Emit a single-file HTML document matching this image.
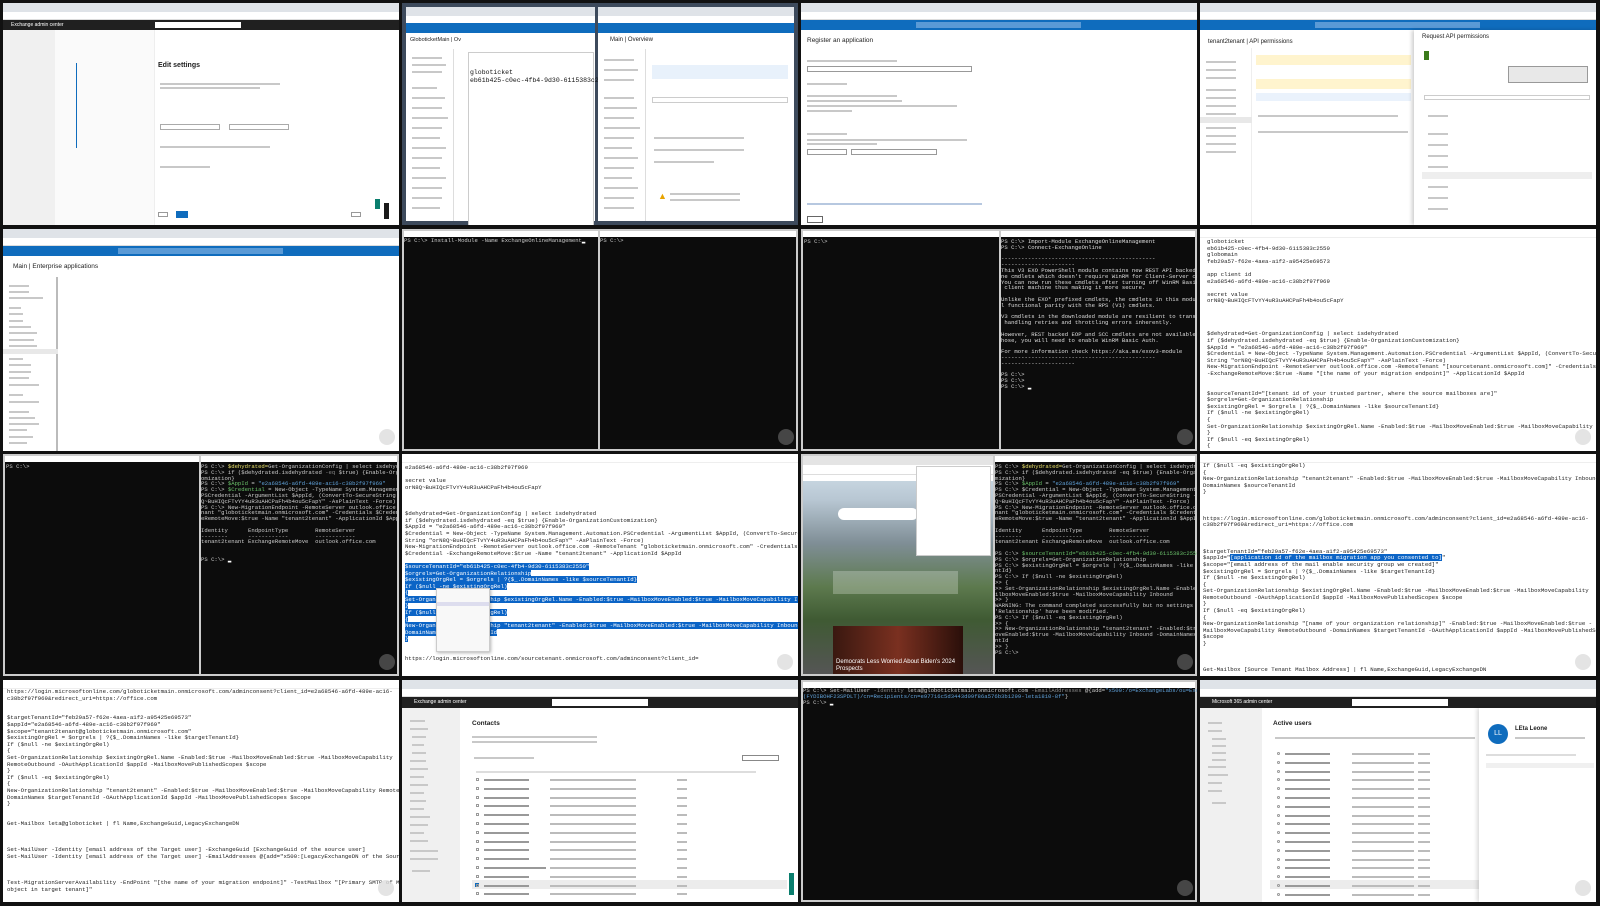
<!DOCTYPE html>
<html><head><meta charset="utf-8">
<style>
*{margin:0;padding:0;box-sizing:border-box}
body{width:1600px;height:906px;background:#111;position:relative;overflow:hidden;font-family:"Liberation Sans",sans-serif}
.t{position:absolute;width:396px;height:222px;background:#fff;overflow:hidden}
.a{position:absolute}
.mono{font-family:"Liberation Mono",monospace;white-space:pre;color:#222}
.tab{background:#dfe3e8;height:9px;left:0;right:0;top:0}
.addr{background:#fff;height:8px;left:0;right:0;top:9px;border-bottom:1px solid #ddd}
.hdr{height:10px;left:0;right:0;top:17px}
.az{background:#0f6cbd}.ex{background:#202020}
.ln{position:absolute;height:2px;background:#c8c8c8}
.term{background:#0c0c0c}
.tt{position:absolute;left:0;right:0;top:0;height:6px;background:#fff}
.tx{position:absolute;font-family:"Liberation Mono",monospace;white-space:pre;color:#ccc;font-size:5.6px;line-height:5.8px}
.np{font-size:5.7px;line-height:6.6px}
.sel{background:#0b64c6;color:#fff}
.btn{position:absolute;width:16px;height:16px;border-radius:50%;background:#ddd;opacity:.8}
</style></head><body>

<!-- 1-1 Exchange edit settings -->
<div class="t" style="left:3px;top:3px">
 <div class="a tab"></div><div class="a addr"></div>
 <div class="a hdr ex"><span style="position:absolute;left:8px;top:2px;color:#fff;font-size:5px">Exchange admin center</span><div class="a" style="left:152px;top:2px;width:86px;height:6px;background:#fff"></div></div>
 <div class="a" style="left:0;top:27px;width:52px;height:195px;background:#f0f0f0"></div>
 <div class="a" style="left:52px;top:27px;width:100px;height:195px;background:#fafafa;border-right:1px solid #eee"></div>
 <div class="a" style="left:73px;top:60px;width:1px;height:85px;background:#0f6cbd"></div>
 <div class="a" style="left:155px;top:59px;font-size:7px;font-weight:bold;color:#222">Edit settings</div>
 <div class="ln" style="left:157px;top:80px;width:120px"></div><div class="ln" style="left:157px;top:84px;width:100px"></div>
 <div class="a" style="left:157px;top:121px;width:60px;height:6px;border:1px solid #aaa"></div>
 <div class="a" style="left:226px;top:121px;width:60px;height:6px;border:1px solid #aaa"></div>
 <div class="ln" style="left:157px;top:143px;width:110px"></div><div class="ln" style="left:157px;top:163px;width:50px"></div>
 <div class="a" style="left:160px;top:331px"></div>
 <div class="a" style="left:155px;top:209px;width:10px;height:5px;border:1px solid #999"></div>
 <div class="a" style="left:173px;top:208px;width:12px;height:7px;background:#0f6cbd"></div>
 <div class="a" style="left:348px;top:209px;width:10px;height:5px;border:1px solid #999"></div>
 <div class="a" style="left:381px;top:200px;width:5px;height:16px;background:#1a1a1a"></div>
 <div class="a" style="left:372px;top:196px;width:5px;height:10px;background:#0a7e6e"></div>
</div>

<!-- 1-2 two azure browsers + notepad -->
<div class="t" style="left:402px;top:3px;background:#3d4a5c">
 <div class="a" style="left:4px;top:4px;width:189px;height:214px;background:#fff">
  <div class="a tab"></div><div class="a addr"></div><div class="a hdr az" style="top:16px"></div>
  <div class="a" style="left:4px;top:30px;font-size:5.5px;color:#222">GloboticketMain | Ov</div>
  <div class="a" style="left:0;top:42px;width:48px;height:172px;border-right:1px solid #ddd"></div>
  <div class="ln" style="left:6px;top:50px;width:30px"></div><div class="ln" style="left:6px;top:57px;width:34px"></div><div class="ln" style="left:6px;top:64px;width:30px"></div><div class="ln" style="left:6px;top:80px;width:25px"></div><div class="ln" style="left:6px;top:90px;width:33px"></div><div class="ln" style="left:6px;top:100px;width:30px"></div><div class="ln" style="left:6px;top:110px;width:36px"></div><div class="ln" style="left:6px;top:120px;width:30px"></div><div class="ln" style="left:6px;top:130px;width:28px"></div><div class="ln" style="left:6px;top:140px;width:34px"></div><div class="ln" style="left:6px;top:150px;width:30px"></div><div class="ln" style="left:6px;top:160px;width:28px"></div><div class="ln" style="left:6px;top:170px;width:34px"></div><div class="ln" style="left:6px;top:180px;width:30px"></div><div class="ln" style="left:6px;top:190px;width:30px"></div><div class="ln" style="left:6px;top:200px;width:28px"></div>
  <div class="a" style="left:62px;top:45px;width:126px;height:245px;background:#fff;border:1px solid #ccc;height:240px"></div>
  <div class="a mono" style="left:64px;top:62px;font-size:6.5px;line-height:8px;color:#111">globoticket
eb61b425-c0ec-4fb4-9d30-6115383c2550</div>
 </div>
 <div class="a" style="left:196px;top:4px;width:196px;height:214px;background:#fff">
  <div class="a tab"></div><div class="a addr"></div><div class="a hdr az" style="top:16px"></div>
  <div class="a" style="left:12px;top:30px;font-size:6px;color:#222">Main | Overview</div>
  <div class="a" style="left:0;top:42px;width:48px;height:172px;border-right:1px solid #ddd"></div>
  <div class="ln" style="left:6px;top:52px;width:30px"></div><div class="ln" style="left:6px;top:62px;width:34px"></div><div class="ln" style="left:6px;top:72px;width:30px"></div><div class="ln" style="left:6px;top:90px;width:30px"></div><div class="ln" style="left:6px;top:100px;width:33px"></div><div class="ln" style="left:6px;top:110px;width:30px"></div><div class="ln" style="left:6px;top:120px;width:36px"></div><div class="ln" style="left:6px;top:130px;width:30px"></div><div class="ln" style="left:6px;top:140px;width:28px"></div><div class="ln" style="left:6px;top:150px;width:34px"></div><div class="ln" style="left:6px;top:160px;width:30px"></div><div class="ln" style="left:6px;top:170px;width:28px"></div><div class="ln" style="left:6px;top:180px;width:34px"></div><div class="ln" style="left:6px;top:190px;width:30px"></div><div class="ln" style="left:6px;top:200px;width:30px"></div>
  <div class="a" style="left:54px;top:58px;width:136px;height:14px;background:#e8f1fb"></div>
  <div class="a" style="left:54px;top:90px;width:136px;height:6px;border:1px solid #ccc"></div>
  <div class="ln" style="left:56px;top:130px;width:90px"></div><div class="ln" style="left:56px;top:142px;width:90px"></div><div class="ln" style="left:56px;top:154px;width:60px"></div>
  <div class="a" style="left:60px;top:184px;color:#e8a300;font-size:9px">▲</div>
  <div class="ln" style="left:72px;top:186px;width:70px"></div><div class="ln" style="left:72px;top:192px;width:70px"></div>
 </div>
</div>

<!-- 1-3 register app -->
<div class="t" style="left:801px;top:3px">
 <div class="a tab"></div><div class="a addr"></div><div class="a hdr az"><div class="a" style="left:115px;top:2px;width:165px;height:6px;background:#5a9ad6"></div></div>
 <div class="a" style="left:6px;top:34px;font-size:6.5px;color:#222">Register an application</div>
 <div class="ln" style="left:6px;top:57px;width:90px"></div>
 <div class="a" style="left:6px;top:63px;width:165px;height:6px;border:1px solid #999"></div>
 <div class="ln" style="left:6px;top:80px;width:40px"></div>
 <div class="ln" style="left:6px;top:92px;width:90px"></div><div class="ln" style="left:6px;top:97px;width:95px"></div><div class="ln" style="left:6px;top:102px;width:150px"></div><div class="ln" style="left:6px;top:107px;width:45px"></div>
 <div class="ln" style="left:6px;top:130px;width:40px"></div><div class="ln" style="left:6px;top:136px;width:160px"></div><div class="ln" style="left:6px;top:140px;width:70px"></div>
 <div class="a" style="left:6px;top:146px;width:40px;height:6px;border:1px solid #999"></div><div class="a" style="left:50px;top:146px;width:86px;height:6px;border:1px solid #999"></div>
 <div class="ln" style="left:6px;top:200px;width:175px;background:#b7c8e0"></div>
 <div class="a" style="left:6px;top:213px;width:16px;height:7px;border:1px solid #666"></div>
</div>

<!-- 1-4 API permissions -->
<div class="t" style="left:1200px;top:3px">
 <div class="a tab"></div><div class="a addr"></div><div class="a hdr az"><div class="a" style="left:115px;top:2px;width:165px;height:6px;background:#5a9ad6"></div></div>
 <div class="a" style="left:8px;top:36px;font-size:6px;color:#222">tenant2tenant | API permissions</div>
 <div class="a" style="left:0;top:45px;width:52px;height:177px;border-right:1px solid #eee"></div>
 <div class="ln" style="left:6px;top:58px;width:30px"></div><div class="ln" style="left:6px;top:66px;width:30px"></div><div class="ln" style="left:6px;top:74px;width:30px"></div><div class="ln" style="left:6px;top:86px;width:30px"></div><div class="ln" style="left:6px;top:94px;width:30px"></div><div class="ln" style="left:6px;top:102px;width:30px"></div><div class="ln" style="left:6px;top:110px;width:30px"></div><div class="a" style="left:0;top:114px;width:52px;height:6px;background:#e8e8e8"></div><div class="ln" style="left:6px;top:124px;width:30px"></div><div class="ln" style="left:6px;top:132px;width:30px"></div><div class="ln" style="left:6px;top:140px;width:30px"></div><div class="ln" style="left:6px;top:148px;width:30px"></div>
 <div class="a" style="left:56px;top:52px;width:155px;height:10px;background:#fff4ce"></div>
 <div class="a" style="left:56px;top:76px;width:155px;height:10px;background:#fff4ce"></div>
 <div class="a" style="left:56px;top:90px;width:155px;height:8px;background:#eaf2fc"></div>
 <div class="ln" style="left:58px;top:112px;width:140px"></div><div class="ln" style="left:58px;top:128px;width:150px"></div>
 <div class="a" style="left:214px;top:27px;width:182px;height:195px;background:#fff;box-shadow:-2px 0 4px rgba(0,0,0,.2)"></div>
 <div class="a" style="left:222px;top:31px;font-size:6px;color:#222">Request API permissions</div>
 <div class="a" style="left:224px;top:48px;width:5px;height:9px;background:#3a7a1a"></div>
 <div class="a" style="left:308px;top:63px;width:80px;height:17px;background:#e8e8e8;border:1px solid #999"></div>
 <div class="a" style="left:224px;top:92px;width:166px;height:5px;border:1px solid #ccc"></div>
 <div class="ln" style="left:228px;top:112px;width:20px"></div><div class="ln" style="left:228px;top:130px;width:20px"></div><div class="ln" style="left:228px;top:141px;width:20px"></div><div class="ln" style="left:228px;top:152px;width:20px"></div><div class="ln" style="left:228px;top:163px;width:20px"></div><div class="a" style="left:222px;top:169px;width:170px;height:7px;background:#eee"></div><div class="ln" style="left:228px;top:183px;width:20px"></div><div class="ln" style="left:228px;top:194px;width:20px"></div><div class="ln" style="left:228px;top:205px;width:20px"></div>
</div>

<!-- 2-1 Enterprise apps -->
<div class="t" style="left:3px;top:229px">
 <div class="a tab"></div><div class="a addr"></div><div class="a hdr az"><div class="a" style="left:115px;top:2px;width:165px;height:6px;background:#5a9ad6"></div></div>
 <div class="a" style="left:10px;top:34px;font-size:6.5px;color:#222">Main | Enterprise applications</div>
 <div class="a" style="left:0;top:48px;width:55px;height:174px;border-right:2px solid #bbb"></div>
 <div class="ln" style="left:6px;top:56px;width:20px"></div><div class="ln" style="left:6px;top:62px;width:20px"></div><div class="ln" style="left:6px;top:68px;width:34px"></div><div class="ln" style="left:6px;top:78px;width:12px"></div><div class="ln" style="left:6px;top:84px;width:14px"></div><div class="ln" style="left:6px;top:91px;width:14px"></div><div class="ln" style="left:6px;top:97px;width:22px"></div><div class="ln" style="left:6px;top:103px;width:28px"></div><div class="ln" style="left:6px;top:110px;width:25px"></div><div class="ln" style="left:6px;top:116px;width:28px"></div><div class="a" style="left:0;top:120px;width:55px;height:5px;background:#e8e8e8"></div><div class="ln" style="left:6px;top:129px;width:14px"></div><div class="ln" style="left:6px;top:135px;width:22px"></div><div class="ln" style="left:6px;top:142px;width:22px"></div><div class="ln" style="left:6px;top:148px;width:20px"></div><div class="ln" style="left:6px;top:155px;width:30px"></div><div class="ln" style="left:6px;top:165px;width:14px"></div><div class="ln" style="left:6px;top:172px;width:30px"></div><div class="ln" style="left:6px;top:182px;width:20px"></div><div class="ln" style="left:6px;top:188px;width:26px"></div><div class="ln" style="left:6px;top:194px;width:30px"></div><div class="ln" style="left:6px;top:200px;width:18px"></div><div class="ln" style="left:6px;top:207px;width:24px"></div><div class="ln" style="left:6px;top:213px;width:18px"></div>
 <div class="btn" style="left:376px;top:200px"></div>
</div>

<!-- 2-2 two terminals -->
<div class="t term" style="left:402px;top:229px;background:#ccc">
 <div class="a term" style="left:2px;top:2px;width:194px;height:218px"><div class="tt"></div><div class="tx" style="left:0;top:7px">PS C:\&gt; Install-Module -Name ExchangeOnlineManagement<span style="color:#fff">▂</span></div></div>
 <div class="a term" style="left:198px;top:2px;width:196px;height:218px"><div class="tt"></div><div class="tx" style="left:0;top:7px">PS C:\&gt;</div></div>
 <div class="btn" style="left:376px;top:200px;background:#555"></div>
</div>

<!-- 2-3 two terminals -->
<div class="t term" style="left:801px;top:229px;background:#ccc">
 <div class="a term" style="left:2px;top:2px;width:196px;height:218px"><div class="tt"></div><div class="tx" style="left:1px;top:8px">PS C:\&gt;</div></div>
 <div class="a term" style="left:200px;top:2px;width:194px;height:218px"><div class="tt"></div><div class="tx" style="left:0;top:8px;color:#ddd">PS C:\&gt; Import-Module ExchangeOnlineManagement
PS C:\&gt; Connect-ExchangeOnline

----------------------------------------------
----------------------
This V3 EXO PowerShell module contains new REST API backed Exchange Onli
ne cmdlets which doesn't require WinRM for Client-Server communication.
You can now run these cmdlets after turning off WinRM Basic Auth in your
 client machine thus making it more secure.

Unlike the EXO* prefixed cmdlets, the cmdlets in this module support ful
l functional parity with the RPS (V1) cmdlets.

V3 cmdlets in the downloaded module are resilient to transient failures,
 handling retries and throttling errors inherently.

However, REST backed EOP and SCC cmdlets are not available yet. To use t
hose, you will need to enable WinRM Basic Auth.

For more information check https://aka.ms/exov3-module
----------------------------------------------
----------------------

PS C:\&gt;
PS C:\&gt;
PS C:\&gt; <span style="color:#fff">▂</span></div></div>
 <div class="btn" style="left:376px;top:200px;background:#555"></div>
</div>

<!-- 2-4 notepad -->
<div class="t" style="left:1200px;top:229px">
 <div class="a" style="left:0;top:0;right:0;height:9px;border-bottom:1px solid #eee"></div>
 <div class="a mono np" style="left:7px;top:10px">globoticket
eb61b425-c0ec-4fb4-9d30-6115383c2550
globomain
feb29a57-f62e-4aea-a1f2-a95425e69573

app client id
e2a68546-a6fd-489e-ac16-c38b2f97f969

secret value
orN8Q~BuHIQcFTvYY4uR3uAHCPaFh4b4ou5cFapY




$dehydrated=Get-OrganizationConfig | select isdehydrated
if ($dehydrated.isdehydrated -eq $true) {Enable-OrganizationCustomization}
$AppId = "e2a68546-a6fd-489e-ac16-c38b2f97f969"
$Credential = New-Object -TypeName System.Management.Automation.PSCredential -ArgumentList $AppId, (ConvertTo-SecureString -
String "orN8Q~BuHIQcFTvYY4uR3uAHCPaFh4b4ou5cFapY" -AsPlainText -Force)
New-MigrationEndpoint -RemoteServer outlook.office.com -RemoteTenant "[sourcetenant.onmicrosoft.com]" -Credentials $Credential
-ExchangeRemoteMove:$true -Name "[the name of your migration endpoint]" -ApplicationId $AppId


$sourceTenantId="[tenant id of your trusted partner, where the source mailboxes are]"
$orgrels=Get-OrganizationRelationship
$existingOrgRel = $orgrels | ?{$_.DomainNames -like $sourceTenantId}
If ($null -ne $existingOrgRel)
{
Set-OrganizationRelationship $existingOrgRel.Name -Enabled:$true -MailboxMoveEnabled:$true -MailboxMoveCapability Inbound
}
If ($null -eq $existingOrgRel)
{</div>
 <div class="btn" style="left:375px;top:200px"></div>
</div>

<!-- 3-1 terminals -->
<div class="t term" style="left:3px;top:454px;background:#ccc">
 <div class="a term" style="left:2px;top:2px;width:194px;height:218px"><div class="tt"></div><div class="tx" style="left:1px;top:8px">PS C:\&gt;</div></div>
 <div class="a term" style="left:198px;top:2px;width:196px;height:218px"><div class="tt"></div><div class="tx" style="left:0;top:8px">PS C:\&gt; <span style="color:#e8e06a">$dehydrated=</span>Get-OrganizationConfig | select isdehydrated
PS C:\&gt; if ($dehydrated.isdehydrated <span style="color:#888">-eq</span> $true) {Enable-OrganizationCust
omization}
PS C:\&gt; <span style="color:#6ac16a">$AppId</span> = <span style="color:#5fa0d8">"e2a68546-a6fd-489e-ac16-c38b2f97f969"</span>
PS C:\&gt; <span style="color:#6ac16a">$Credential</span> = New-Object -TypeName System.Management.Automation.
PSCredential -ArgumentList $AppId, (ConvertTo-SecureString -String "orN8
Q~BuHIQcFTvYY4uR3uAHCPaFh4b4ou5cFapY" -AsPlainText -Force)
PS C:\&gt; New-MigrationEndpoint -RemoteServer outlook.office.com -RemoteTe
nant "globoticketmain.onmicrosoft.com" -Credentials $Credential -Exchang
eRemoteMove:$true -Name "tenant2tenant" -ApplicationId $AppId

Identity      EndpointType        RemoteServer
--------      ------------        ------------
tenant2tenant ExchangeRemoteMove  outlook.office.com


PS C:\&gt; <span style="color:#fff">▂</span></div></div>
 <div class="btn" style="left:376px;top:200px;background:#555"></div>
</div>

<!-- 3-2 notepad with selection -->
<div class="t" style="left:402px;top:454px">
 <div class="a" style="left:0;top:0;right:0;height:9px;border-bottom:1px solid #eee"></div>
 <div class="a mono np" style="left:3px;top:11px">e2a68546-a6fd-489e-ac16-c38b2f97f969

secret value
orN8Q~BuHIQcFTvYY4uR3uAHCPaFh4b4ou5cFapY



$dehydrated=Get-OrganizationConfig | select isdehydrated
if ($dehydrated.isdehydrated -eq $true) {Enable-OrganizationCustomization}
$AppId = "e2a68546-a6fd-489e-ac16-c38b2f97f969"
$Credential = New-Object -TypeName System.Management.Automation.PSCredential -ArgumentList $AppId, (ConvertTo-SecureString -
String "orN8Q~BuHIQcFTvYY4uR3uAHCPaFh4b4ou5cFapY" -AsPlainText -Force)
New-MigrationEndpoint -RemoteServer outlook.office.com -RemoteTenant "globoticketmain.onmicrosoft.com" -Credentials
$Credential -ExchangeRemoteMove:$true -Name "tenant2tenant" -ApplicationId $AppId

<span class="sel">$sourceTenantId="eb61b425-c0ec-4fb4-9d30-6115383c2550"</span>
<span class="sel">$orgrels=Get-OrganizationRelationship</span>
<span class="sel">$existingOrgRel = $orgrels | ?{$_.DomainNames -like $sourceTenantId}</span>
<span class="sel">If ($null -ne $existingOrgRel)</span>
<span class="sel">{</span>
<span class="sel">Set-OrganizationRelationship $existingOrgRel.Name -Enabled:$true -MailboxMoveEnabled:$true -MailboxMoveCapability Inbound</span>
<span class="sel">}</span>
<span class="sel">If ($null -eq $existingOrgRel)</span>
<span class="sel">{</span>
<span class="sel">New-OrganizationRelationship "tenant2tenant" -Enabled:$true -MailboxMoveEnabled:$true -MailboxMoveCapability Inbound -</span>
<span class="sel">DomainNames $sourceTenantId</span>
<span class="sel">}</span>


https://login.microsoftonline.com/sourcetenant.onmicrosoft.com/adminconsent?client_id=</div>
 <div class="a" style="left:34px;top:134px;width:54px;height:64px;background:#f8f8f8;border:1px solid #ccc;box-shadow:1px 1px 3px rgba(0,0,0,.3)"></div>
 <div class="a" style="left:35px;top:148px;width:52px;height:4px;background:#dde"></div>
 <div class="btn" style="left:375px;top:200px"></div>
</div>

<!-- 3-3 Edge + terminal -->
<div class="t" style="left:801px;top:454px;background:#ccc">
 <div class="a" style="left:2px;top:2px;width:190px;height:218px;background:linear-gradient(#d8e6ef 0,#b8c7d3 20%,#7f8e96 40%,#5d7a4e 60%,#3f5a33 75%,#555 100%)">
  <div class="a tab" style="background:#e4e4e4"></div><div class="a addr" style="height:10px"></div>
  <div class="a" style="left:0;top:19px;right:0;height:6px;background:#fff"></div>
  <div class="a" style="left:35px;top:52px;width:80px;height:12px;background:#fff;border-radius:6px"></div>
  <div class="a" style="left:30px;top:115px;width:125px;height:23px;background:rgba(255,255,255,.25)"></div>
  <div class="a" style="left:30px;top:170px;width:130px;height:48px;background:linear-gradient(90deg,#3a1810,#7a3020,#2a0f0a)"></div>
  <div class="a" style="left:33px;top:203px;color:#fff;font-size:6px;line-height:7px">Democrats Less Worried About Biden's 2024<br>Prospects</div>
  <div class="a" style="left:113px;top:10px;width:75px;height:90px;background:#fff;border:1px solid #ccc"></div>
 </div>
 <div class="a term" style="left:194px;top:2px;width:200px;height:218px"><div class="tt"></div><div class="tx" style="left:0;top:8px">PS C:\&gt; <span style="color:#e8e06a">$dehydrated=</span>Get-OrganizationConfig | select isdehydrated
PS C:\&gt; if ($dehydrated.isdehydrated -eq $true) {Enable-Organization
mization}
PS C:\&gt; <span style="color:#6ac16a">$AppId</span> = <span style="color:#5fa0d8">"e2a68546-a6fd-489e-ac16-c38b2f97f969"</span>
PS C:\&gt; $Credential = New-Object -TypeName System.Management.Automation
PSCredential -ArgumentList $AppId, (ConvertTo-SecureString -String
Q~BuHIQcFTvYY4uR3uAHCPaFh4b4ou5cFapY" -AsPlainText -Force)
PS C:\&gt; New-MigrationEndpoint -RemoteServer outlook.office.com -Remote
nant "globoticketmain.onmicrosoft.com" -Credentials $Credential -Exchang
eRemoteMove:$true -Name "tenant2tenant" -ApplicationId $AppId

Identity      EndpointType        RemoteServer
--------      ------------        ------------
tenant2tenant ExchangeRemoteMove  outlook.office.com

PS C:\&gt; <span style="color:#6ac16a">$sourceTenantId="eb61b425-c0ec-4fb4-9d30-6115383c2550"</span>
PS C:\&gt; $orgrels=Get-OrganizationRelationship
PS C:\&gt; $existingOrgRel = $orgrels | ?{$_.DomainNames -like $sourceTena
ntId}
PS C:\&gt; If ($null -ne $existingOrgRel)
&gt;&gt; {
&gt;&gt; Set-OrganizationRelationship $existingOrgRel.Name -Enabled:$true -Ma
ilboxMoveEnabled:$true -MailboxMoveCapability Inbound
&gt;&gt; }
WARNING: The command completed successfully but no settings of
'Relationship' have been modified.
PS C:\&gt; If ($null -eq $existingOrgRel)
&gt;&gt; {
&gt;&gt; New-OrganizationRelationship "tenant2tenant" -Enabled:$true -Mailbox
oveEnabled:$true -MailboxMoveCapability Inbound -DomainNames $sourceTena
ntId
&gt;&gt; }
PS C:\&gt;</div></div>
 <div class="btn" style="left:376px;top:200px;background:#555"></div>
</div>

<!-- 3-4 notepad -->
<div class="t" style="left:1200px;top:454px">
 <div class="a" style="left:0;top:0;right:0;height:9px;border-bottom:1px solid #eee"></div>
 <div class="a mono np" style="left:3px;top:9px">If ($null -eq $existingOrgRel)
{
New-OrganizationRelationship "tenant2tenant" -Enabled:$true -MailboxMoveEnabled:$true -MailboxMoveCapability Inbound -
DomainNames $sourceTenantId
}



https://login.microsoftonline.com/globoticketmain.onmicrosoft.com/adminconsent?client_id=e2a68546-a6fd-489e-ac16-
c38b2f97f969&amp;redirect_uri=https://office.com



$targetTenantId="feb29a57-f62e-4aea-a1f2-a95425e69573"
$appId="<span class="sel">[application id of the mailbox migration app you consented to]</span>"
$scope="[email address of the mail enable security group we created]"
$existingOrgRel = $orgrels | ?{$_.DomainNames -like $targetTenantId}
If ($null -ne $existingOrgRel)
{
Set-OrganizationRelationship $existingOrgRel.Name -Enabled:$true -MailboxMoveEnabled:$true -MailboxMoveCapability
RemoteOutbound -OAuthApplicationId $appId -MailboxMovePublishedScopes $scope
}
If ($null -eq $existingOrgRel)
{
New-OrganizationRelationship "[name of your organization relationship]" -Enabled:$true -MailboxMoveEnabled:$true -
MailboxMoveCapability RemoteOutbound -DomainNames $targetTenantId -OAuthApplicationId $appId -MailboxMovePublishedScopes
$scope
}



Get-Mailbox [Source Tenant Mailbox Address] | fl Name,ExchangeGuid,LegacyExchangeDN</div>
 <div class="btn" style="left:375px;top:200px"></div>
</div>

<!-- 4-1 notepad -->
<div class="t" style="left:3px;top:680px">
 <div class="a" style="left:0;top:0;right:0;height:9px;border-bottom:1px solid #eee"></div>
 <div class="a mono np" style="left:4px;top:9px">https://login.microsoftonline.com/globoticketmain.onmicrosoft.com/adminconsent?client_id=e2a68546-a6fd-489e-ac16-
c38b2f97f969&amp;redirect_uri=https://office.com


$targetTenantId="feb29a57-f62e-4aea-a1f2-a95425e69573"
$appId="e2a68546-a6fd-489e-ac16-c38b2f97f969"
$scope="tenant2tenant@globoticketmain.onmicrosoft.com"
$existingOrgRel = $orgrels | ?{$_.DomainNames -like $targetTenantId}
If ($null -ne $existingOrgRel)
{
Set-OrganizationRelationship $existingOrgRel.Name -Enabled:$true -MailboxMoveEnabled:$true -MailboxMoveCapability
RemoteOutbound -OAuthApplicationId $appId -MailboxMovePublishedScopes $scope
}
If ($null -eq $existingOrgRel)
{
New-OrganizationRelationship "tenant2tenant" -Enabled:$true -MailboxMoveEnabled:$true -MailboxMoveCapability RemoteOutbound -
DomainNames $targetTenantId -OAuthApplicationId $appId -MailboxMovePublishedScopes $scope
}


Get-Mailbox leta@globoticket | fl Name,ExchangeGuid,LegacyExchangeDN



Set-MailUser -Identity [email address of the Target user] -ExchangeGuid [ExchangeGuid of the source user]
Set-MailUser -Identity [email address of the Target user] -EmailAddresses @{add="x500:[LegacyExchangeDN of the Source user]"



Test-MigrationServerAvailability -EndPoint "[the name of your migration endpoint]" -TestMailbox "[Primary SMTP of Mail User
object in target tenant]"</div>
 <div class="btn" style="left:375px;top:200px"></div>
</div>

<!-- 4-2 Exchange contacts -->
<div class="t" style="left:402px;top:680px">
 <div class="a tab"></div><div class="a addr"></div>
 <div class="a hdr ex" style="top:17px;height:11px"><span style="position:absolute;left:12px;top:2px;color:#fff;font-size:5px">Exchange admin center</span><div class="a" style="left:150px;top:2px;width:96px;height:7px;background:#fff"></div></div>
 <div class="a" style="left:0;top:28px;width:58px;height:194px;background:#f0f0f0"></div>
 <div class="ln" style="left:8px;top:40px;width:15px"></div><div class="ln" style="left:8px;top:48px;width:18px"></div><div class="ln" style="left:10px;top:56px;width:14px"></div><div class="ln" style="left:10px;top:64px;width:12px"></div><div class="ln" style="left:10px;top:72px;width:14px"></div><div class="ln" style="left:8px;top:80px;width:16px"></div><div class="ln" style="left:8px;top:88px;width:18px"></div><div class="ln" style="left:8px;top:96px;width:14px"></div><div class="ln" style="left:8px;top:104px;width:18px"></div><div class="ln" style="left:8px;top:112px;width:14px"></div><div class="ln" style="left:8px;top:120px;width:16px"></div><div class="ln" style="left:8px;top:128px;width:14px"></div><div class="ln" style="left:8px;top:136px;width:20px"></div><div class="ln" style="left:8px;top:144px;width:18px"></div><div class="ln" style="left:8px;top:152px;width:14px"></div><div class="ln" style="left:8px;top:160px;width:18px"></div><div class="ln" style="left:8px;top:170px;width:28px"></div><div class="ln" style="left:8px;top:178px;width:28px"></div><div class="ln" style="left:10px;top:190px;width:18px"></div>
 <div class="a" style="left:70px;top:40px;font-size:6.5px;font-weight:bold;color:#222">Contacts</div>
 <div class="ln" style="left:70px;top:56px;width:125px"></div><div class="ln" style="left:70px;top:61px;width:125px"></div>
 <div class="ln" style="left:72px;top:77px;width:60px"></div><div class="a" style="left:340px;top:75px;width:37px;height:6px;border:1px solid #888"></div>
 <div class="ln" style="left:74px;top:91px;width:280px;background:#ddd"></div>
 <div id="rows42"></div>
 <div class="a" style="left:70px;top:200px;width:315px;height:9px;background:#ececec"></div>
 <div class="a" style="left:73px;top:203px;width:4px;height:4px;background:#0f6cbd"></div>
 <div class="a" style="left:387px;top:193px;width:5px;height:22px;background:#0a7e6e"></div>
</div>

<!-- 4-3 terminal -->
<div class="t term" style="left:801px;top:680px;background:#ccc">
 <div class="a term" style="left:2px;top:2px;width:392px;height:218px"><div class="tt"></div><div class="tx" style="left:0;top:6px">PS C:\&gt; Set-MailUser <span style="color:#888">-Identity</span> leta@globoticketmain.onmicrosoft.com <span style="color:#888">-EmailAddresses</span> @{add=<span style="color:#5fa0d8">"x500:/o=ExchangeLabs/ou=Exchange Administrative Group</span>
<span style="color:#5fa0d8">(FYDIBOHF23SPDLT)/cn=Recipients/cn=e97716c5d3443d09f86a576b3b1299-leta1810-8f"</span>}
PS C:\&gt; <span style="color:#fff">▂</span></div></div>
 <div class="btn" style="left:376px;top:200px;background:#555"></div>
</div>

<!-- 4-4 M365 active users -->
<div class="t" style="left:1200px;top:680px">
 <div class="a tab"></div><div class="a addr"></div>
 <div class="a hdr ex" style="top:17px;height:11px"><span style="position:absolute;left:12px;top:2px;color:#fff;font-size:5px">Microsoft 365 admin center</span><div class="a" style="left:152px;top:2px;width:96px;height:7px;background:#fff"></div></div>
 <div class="a" style="left:0;top:28px;width:62px;height:194px;background:#f0f0f0"></div>
 <div class="ln" style="left:8px;top:42px;width:14px"></div><div class="ln" style="left:8px;top:50px;width:14px"></div><div class="ln" style="left:12px;top:58px;width:14px"></div><div class="ln" style="left:12px;top:65px;width:14px"></div><div class="ln" style="left:12px;top:72px;width:14px"></div><div class="ln" style="left:12px;top:79px;width:14px"></div><div class="ln" style="left:8px;top:86px;width:18px"></div><div class="ln" style="left:8px;top:94px;width:20px"></div><div class="ln" style="left:8px;top:102px;width:14px"></div><div class="ln" style="left:8px;top:110px;width:14px"></div><div class="ln" style="left:12px;top:122px;width:14px"></div>
 <div class="a" style="left:73px;top:40px;font-size:6.5px;font-weight:bold;color:#222">Active users</div>
 <div class="ln" style="left:75px;top:57px;width:200px"></div>
 <div id="rows44"></div>
 <div class="a" style="left:70px;top:200px;width:210px;height:9px;background:#ececec"></div>
 <div class="a" style="left:279px;top:28px;width:117px;height:194px;background:#fff;box-shadow:-2px 0 4px rgba(0,0,0,.15)"></div>
 <div class="a" style="left:288px;top:44px;width:20px;height:20px;border-radius:50%;background:#0f6cbd;color:#fff;font-size:7px;text-align:center;line-height:20px">LL</div>
 <div class="a" style="left:315px;top:46px;font-size:6px;font-weight:bold;color:#222">LEta Leone</div>
 <div class="ln" style="left:315px;top:57px;width:70px"></div>
 <div class="ln" style="left:286px;top:74px;width:90px;background:#ddd"></div>
 <div class="a" style="left:286px;top:83px;width:108px;height:5px;background:#f0f0f0"></div>
 <div class="btn" style="left:375px;top:200px"></div>
</div>

<script>
(function(){
 var r=document.getElementById('rows42').parentNode,h='';
 for(var i=0;i<14;i++){var y=98+i*8.8;h+='<div class="a" style="left:74px;top:'+y+'px;width:3px;height:3px;border:1px solid #999"></div><div class="ln" style="left:82px;top:'+(y+1)+'px;width:'+(i==10?62:45)+'px;background:#999"></div><div class="ln" style="left:148px;top:'+(y+1)+'px;width:86px;background:#bbb"></div><div class="ln" style="left:275px;top:'+(y+1)+'px;width:10px;background:#bbb"></div>';}
 r.insertAdjacentHTML('beforeend',h);
 var s=document.getElementById('rows44').parentNode;h='';
 for(var j=0;j<17;j++){var z=72+j*8.8;h+='<div class="a" style="left:77px;top:'+z+'px;width:3px;height:3px;border:1px solid #999;border-radius:50%"></div><div class="ln" style="left:85px;top:'+(z+1)+'px;width:45px;background:#999"></div><div class="ln" style="left:152px;top:'+(z+1)+'px;width:62px;background:#bbb"></div><div class="ln" style="left:218px;top:'+(z+1)+'px;width:12px;background:#bbb"></div>';}
 s.insertAdjacentHTML('beforeend',h);
})();
</script>
</body></html>
